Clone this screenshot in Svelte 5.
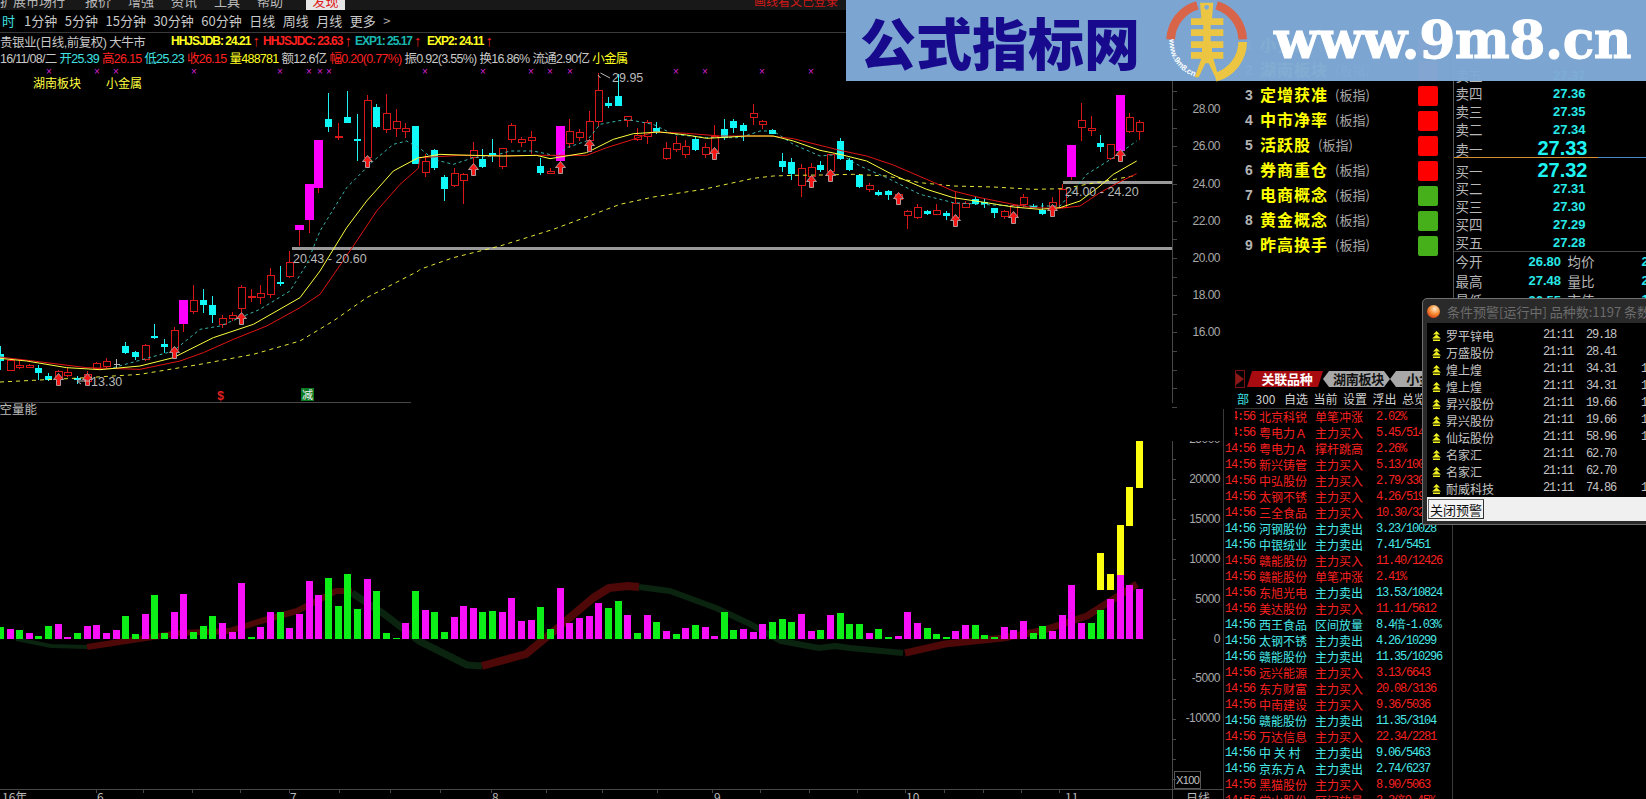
<script>
	// x position of the nth trading day on the chart
	const slot = (n) => Math.round(9.5 + 9.653 * n) + 0.5;

	// [n, type, high, top, bottom, low], y values read at 3x from the reference
	const rawA = [
		[-1,'c',795,820,840,868],[0,'r',830,838,868,870],[1,'r',838,853,859,865],[2,'r',848,852,858,862],[3,'c',852,860,876,898],[4,'c',875,885,897,900],[5,'r',868,872,890,912],[6,'r',862,873,882,888],[7,'c',885,892,898,910],[8,'r',870,880,900,912],[9,'r',842,848,863,868],[10,'r',832,840,856,860],[11,'g',835,849,850,860],[12,'c',782,795,815,818],[13,'c',810,812,828,838],[14,'r',788,793,835,840],[15,'c',730,765,770,775],[16,'c',775,790,798,815],[17,'r',738,748,805,810],[18,'m',657,657,728,752],[19,'r',612,658,692,700],[20,'c',625,657,671,695],[21,'c',645,673,702,725],[22,'r',702,712,730,740],[23,'r',693,703,713,720],[24,'r',612,620,682,700],[25,'r',625,645,650,662],[26,'r',612,637,650,670],[27,'r',562,583,640,650],[28,'c',555,603,608,615],[29,'r',510,545,587,590],[30,'m',432,432,446,495],[31,'m',309,309,416,455],[32,'m',177,177,322,335],[33,'c',37,115,137,153],[34,'r',125,165,170,177],[35,'c',30,108,125,127],[36,'c',100,174,180,240],[37,'r',42,58,228,240],[38,'c',70,78,137,140],[39,'r',40,97,146,157],[40,'r',85,121,142,168],[41,'r',127,142,152,170],[42,'c',135,135,248,250]
	];
	const rawB = [
		[43,'r',280,302,335,347],[44,'c',265,268,320,328],[45,'c',342,348,383,420],[46,'r',322,337,372,378],[47,'r',335,340,358,430],[48,'r',243,268,290,310],[49,'c',265,295,318,320],[50,'c',233,277,283,303],[51,'r',260,262,315,325],[52,'r',185,193,236,245],[53,'r',228,236,245,258],[54,'r',210,228,237,280],[55,'c',290,315,335,342],[56,'r',320,331,338,338],[57,'m',195,195,300,310],[58,'r',175,210,248,260],[59,'r',205,213,228,240],[60,'r',150,181,237,245],[61,'r',35,88,180,197],[62,'c',108,126,134,140],[63,'c',40,105,134,134],[64,'r',165,165,178,198],[65,'r',200,222,235,240],[66,'r',178,185,225,248],[67,'c',183,202,214,218],[68,'r',243,262,293,298],[69,'r',225,247,266,272],[70,'r',238,256,280,292],[71,'c',225,235,267,270],[72,'r',245,259,281,292],[73,'r',193,225,270,275],[74,'c',175,205,232,238],[75,'c',175,181,201,216],[76,'c',185,193,209,240],[77,'r',128,157,170,192],[78,'r',177,181,189,205],[79,'c',205,208,220,220],[80,'c',277,301,317,333],[81,'c',292,304,339,357],[82,'r',310,322,374,407],[83,'r',307,319,345,370],[84,'c',300,313,328,332],
		[85,'r',278,280,330,340],[86,'c',230,241,295,298],[87,'c',290,298,326,330],[88,'c',340,342,377,380],[89,'r',365,372,384,392],[90,'c',388,393,401,404],[91,'c',387,391,402,416],[92,'r',395,400,415,420],[93,'r',447,452,463,505],[94,'r',430,440,470,473],[95,'c',446,450,459,461],[96,'r',430,448,460,463],[97,'c',450,456,466,476],[98,'r',392,428,470,495],[99,'r',420,428,440,442],[100,'c',408,413,430,433],[101,'c',410,423,428,440],[102,'c',440,442,456,470],[103,'r',448,452,466,473],[104,'r',430,433,470,478],[105,'r',400,410,430,437],[106,'c',430,434,440,442],[107,'c',427,446,460,462],[108,'r',408,423,437,445],[109,'r',370,385,440,442],[110,'m',253,253,347,358],[111,'r',125,178,199,240],[112,'r',165,202,208,224],[113,'c',223,245,258,272],[114,'r',250,250,293,296],[115,'m',102,102,270,275],[116,'r',157,169,210,216],[117,'r',177,184,212,238]
	];
	const toCandle = (base) => ([n, type, hi, top, bot, lo]) => ({
		x: slot(n),
		type,
		hi: base + hi / 3,
		top: base + top / 3,
		bot: base + bot / 3,
		lo: base + lo / 3
	});
	const candles = [...rawA.map(toCandle(80)), ...rawB.map(toCandle(60))];

	const arrows = [[5,379],[8,379],[17,352],[24,318],[37,161],[48,169],[57,167],[60,145],[73,153],[83,181],[85,175],[92,198],[98,220],[104,217],[108,210],[115,155]];
	const crosses = [49,97,116,194,280,309,320,329,425,483,531,550,570,676,705,762,811];

	// volume bars, tops read at 3x
	const volA = 'g288 m294 g297 m306 g315 g285 m279 m318 g306 m285 m282 m306 m297 g255 g309 m249 g192 g306 m243 m189 g303 g285 g255 m276 m303 m156 g318 m288 m243 g243 m291 m249 m150 m192 g141 g225 g129 g234 m144 g180 g306 g321 m276 g180 m237 g243 g303 m258 m225 m231 g243 g240 m243 m201 m270 m267 g228 g294 m171 m276 m261 m255 m216 g231 g210'.split(' ');
	const volB = 'm582 g636 m582 g603 m630 g639 m621 g612 m618 m645 g573 g627 m624 m633 m609 g603 g594 g603 m579 m630 g627 m582 g576 g609 g609 m636 g624 g648 m645 m573 m606 g621 g640 g648 m630 m612 g612 g642 g648 m618 m627 m600 g636 g615 m630 m582 m492 m606 g606 g567 m534 m462 m492 m504'.split(' ');
	const volBase = 637.7;
	const bars = [
		...volA.map((v, i) => ({ n: i - 1, type: v[0], top: 530 + Number(v.slice(1)) / 3 })),
		...volB.map((v, i) => ({ n: i + 64, type: v[0], top: 420 + Number(v.slice(1)) / 3 }))
	];
	const yellowBars = [[113,396,507],[114,459,507],[115,312,462],[116,198,315],[117,60,201]];

	const ribbons = [
		{ c: '#0a2410', w: 4, pts: '16,638 51,645 87,646' },
		{ c: '#4e0808', w: 6, pts: '87,646 126,640 180,632 229,630 261,620 297,610 336,590 352,590' },
		{ c: '#0a2410', w: 7, pts: '352,592 384,613 419,640 467,664 482,665' },
		{ c: '#4e0808', w: 8, pts: '482,665 526,653 554,630 593,597 609,587 628,585 639,586' },
		{ c: '#0a2410', w: 6, pts: '639,586 670,590 716,607 750,623 781,640 819,647 835,645 850,647 903,652' },
		{ c: '#4e0808', w: 7, pts: '905,652 945,643 1003,637 1041,630 1087,615 1137,583' }
	];

	const join = (segs) =>
		segs.map(([ox, oy, list]) => list.map(([x, y]) => `${ox + x / 3},${oy + y / 3}`).join(' ')).join(' ');
	const redLine = join([
		[0, 80, [[0,828],[100,840],[260,860],[420,865],[540,840],[610,815],[700,775],[800,735],[900,680],[960,640],[1060,495],[1130,390],[1200,310],[1255,262]]],
		[420, 60, [[0,290],[120,283],[250,285],[350,283],[500,283],[560,260],[640,235],[700,213],[800,217],[900,225],[1050,225],[1120,233]]],
		[820, 60, [[0,253],[60,268],[140,285],[220,312],[320,355],[400,390],[480,410],[580,430],[640,440],[720,442],[780,435],[840,395],[900,362],[950,338]]]
	]);
	const yellowLine = join([
		[0, 80, [[0,832],[80,840],[200,860],[300,866],[420,855],[520,830],[640,770],[760,730],[900,650],[960,570],[1040,440],[1100,360],[1180,270],[1255,230]]],
		[420, 60, [[0,290],[60,280],[120,282],[250,285],[350,283],[390,293],[500,275],[580,235],[640,218],[720,213],[800,222],[860,232],[980,225],[1060,225],[1120,240]]],
		[820, 60, [[0,268],[60,280],[140,300],[220,342],[320,385],[400,410],[480,422],[580,438],[660,445],[720,440],[780,420],[840,375],[880,340],[950,300]]]
	]);
	const cyanLine = join([
		[0, 80, [[340,860],[430,835],[520,810],[600,745],[660,735],[780,685],[870,630],[920,550],[960,450],[1040,320],[1120,240],[1180,190],[1220,180],[1255,200]]],
		[420, 60, [[0,262],[40,295],[100,310],[160,290],[220,285],[270,270],[340,270],[410,285],[440,260],[500,240],[540,190],[620,175],[700,190],[760,220],[860,230],[960,230],[1020,210],[1060,210],[1120,250]]],
		[820, 60, [[0,285],[60,280],[120,315],[200,350],[300,400],[400,425],[480,430],[580,435],[660,435],[720,435],[760,390],[800,340],[880,290],[950,240]]]
	]);
	const dashLine = join([
		[0, 80, [[0,903],[100,898],[260,890],[420,880],[600,850],[760,820],[900,780],[1000,720],[1100,650],[1255,570]]],
		[420, 60, [[0,625],[100,590],[240,555],[400,505],[600,430],[700,408],[850,385],[1000,352],[1060,345],[1120,343]]],
		[820, 60, [[0,342],[100,340],[200,345],[300,365],[400,375],[520,378],[640,385],[730,383],[800,370],[900,352],[950,343]]]
	]);

	const priceLabels = [['28.00',108],['26.00',145],['24.00',182.5],['22.00',220],['20.00',257],['18.00',294],['16.00',331]];
	const volLabels = [['25000',438],['20000',478],['15000',518],['10000',558],['5000',598],['0',637.5],['-5000',677],['-10000',717]];
	const monthLabels = [['16年',0],['6',95],['7',288],['8',490],['9',712],['10',904],['11',1063]];
	const dateTicks = [96,143,192,240,289,339,390,440,491,546,602,657,712,760,809,857,905,944,983,1021,1059];
	const priceTicks = Array.from({ length: 18 }, (_, i) => 89.5 + 18.6 * i);
	const volTicks = Array.from({ length: 17 }, (_, i) => 458 + 20 * i);

	const periods = ['1分钟', '5分钟', '15分钟', '30分钟', '60分钟', '日线', '周线', '月线', '更多'];
	const menus = ['报价', '增强', '资讯', '工具', '帮助'];

	const ranks = [
		{ name: '小金属', up: true },
		{ name: '湖南板块', up: true },
		{ name: '定增获准', up: true },
		{ name: '中市净率', up: true },
		{ name: '活跃股', up: true },
		{ name: '券商重仓', up: true },
		{ name: '电商概念', up: false },
		{ name: '黄金概念', up: false },
		{ name: '昨高换手', up: false }
	];

	const book = [
		{ label: '卖五', price: '27.37' },
		{ label: '卖四', price: '27.36' },
		{ label: '卖三', price: '27.35' },
		{ label: '卖二', price: '27.34' },
		{ label: '卖一', price: '27.33', big: true, qty: '1' },
		{ label: '买一', price: '27.32', big: true, split: true },
		{ label: '买二', price: '27.31', qty: '1' },
		{ label: '买三', price: '27.30', qty: '1' },
		{ label: '买四', price: '27.29' },
		{ label: '买五', price: '27.28' }
	];
	const stats = [
		['今开', '26.80', '均价', '27.15'],
		['最高', '27.48', '量比', '2.31'],
		['最低', '26.55', '市值', '126亿']
	];

	// r = red, c = cyan; time+name colour, then type+value colour
	const radar = [
		['北京科锐','单笔冲涨','2.02%','r','r'],['粤电力Ａ','主力买入','5.45/5140','r','r'],['粤电力Ａ','撑杆跳高','2.26%','r','r'],['新兴铸管','主力买入','5.13/10062','r','r'],['中弘股份','主力买入','2.79/33050','r','r'],['太钢不锈','主力买入','4.26/51980','r','r'],['三全食品','主力买入','10.30/3225','r','r'],['河钢股份','主力卖出','3.23/10028','c','c'],['中银绒业','主力卖出','7.41/5451','c','c'],['赣能股份','主力买入','11.40/12426','r','r'],['赣能股份','单笔冲涨','2.41%','r','r'],['东旭光电','主力卖出','13.53/10824','r','c'],['美达股份','主力买入','11.11/5612','r','r'],['西王食品','区间放量','8.4倍-1.03%','c','c'],['太钢不锈','主力卖出','4.26/10299','c','c'],['赣能股份','主力卖出','11.35/10296','c','c'],['远兴能源','主力买入','3.13/6643','r','r'],['东方财富','主力买入','20.08/3136','r','r'],['中南建设','主力买入','9.36/5036','r','r'],['赣能股份','主力卖出','11.35/3104','c','c'],['万达信息','主力买入','22.34/2281','r','r'],['中 关 村','主力卖出','9.06/5463','c','c'],['京东方Ａ','主力卖出','2.74/6237','c','c'],['黑猫股份','主力买入','8.90/5063','r','r'],['常山股份','区间放量','3.3倍0.45%','r','r']
	];

	const alerts = [
		['罗平锌电','29.18',''],['万盛股份','28.41',''],['煌上煌','34.31','1'],['煌上煌','34.31','1'],['昇兴股份','19.66','1'],['昇兴股份','19.66','1'],['仙坛股份','58.96','1'],['名家汇','62.70',''],['名家汇','62.70',''],['耐威科技','74.86','1']
	];
</script>

<div class="page">
	<header class="menu">
		<span class="menu-first">扩展市场行情</span>
		{#each menus as m}
			<span>{m}</span>
		{/each}
		<span class="menu-tab">发现</span>
		<span class="menu-note">画线看文已登录</span>
	</header>

	<nav class="periods">
		<span class="period-on">时</span>
		{#each periods as p}
			<span>{p}</span>
		{/each}
		<span class="chev">&gt;</span>
	</nav>

	<div class="body">
		<section class="chart-col">
			<div class="info info-one">
				<span class="stock">贵银业(日线,前复权) 大牛市</span>
				<b class="yel ind">HHJSJDB: 24.21<i>↑</i></b>
				<b class="red ind">HHJSJDC: 23.63<i>↑</i></b>
				<b class="teal ind short">EXP1: 25.17<i>↑</i></b>
				<b class="yel ind short">EXP2: 24.11<i>↑</i></b>
			</div>
			<div class="info info-two">
				<span>16/11/08/二</span>
				<span class="cy">开25.39</span>
				<span class="red">高26.15</span>
				<span class="cy">低25.23</span>
				<span class="red">收26.15</span>
				<span class="yel">量488781</span>
				<span>额12.6亿</span>
				<span class="red">幅0.20(0.77%)</span>
				<span>振0.92(3.55%)</span>
				<span>换16.86%</span>
				<span>流通2.90亿</span>
				<span class="yel">小金属</span>
			</div>

			<svg class="chart" width="1223" height="734" viewBox="0 65 1223 734">
				<g class="axes">
					<line x1="1172.5" y1="65" x2="1172.5" y2="402" />
					<line x1="1172.5" y1="440" x2="1172.5" y2="799" />
					<line x1="0" y1="401.5" x2="411" y2="401.5" />
					<line x1="0" y1="788.5" x2="1223" y2="788.5" />
					{#each priceTicks as y}
						<line x1="1172" y1={Math.round(y) + 0.5} x2="1177" y2={Math.round(y) + 0.5} />
					{/each}
					{#each volTicks as y}
						<line x1="1172" y1={Math.round(y) + 0.5} x2="1176" y2={Math.round(y) + 0.5} />
					{/each}
					{#each dateTicks as x}
						<line x1={x + 0.5} y1="788" x2={x + 0.5} y2="792" />
					{/each}
				</g>

				{#each crosses as x}
					<text class="cross" x={x} y="74">×</text>
				{/each}
				<text class="tag" x="33" y="87">湖南板块</text>
				<text class="tag" x="106" y="87">小金属</text>

				<rect class="level" x="292" y="245.5" width="880" height="3" />
				<rect class="level" x="1063" y="179.5" width="109" height="3" />

				{#each candles as c}
					{#if c.type === 'c'}
						<line class="wick-c" x1={c.x} y1={c.hi} x2={c.x} y2={c.lo} />
						<rect class="body-c" x={c.x - 3.5} y={c.top} width="7" height={c.bot - c.top} />
					{:else if c.type === 'm'}
						<line class="wick-r" x1={c.x} y1={c.hi} x2={c.x} y2={c.lo} />
						<rect class="body-m" x={c.x - 4.5} y={c.top} width="9" height={c.bot - c.top} />
					{:else if c.type === 'g'}
						<line class="wick-g" x1={c.x} y1={c.hi} x2={c.x} y2={c.lo} />
						<line class="wick-g" x1={c.x - 3} y1={c.top} x2={c.x + 3} y2={c.top} />
					{:else}
						<line class="wick-r" x1={c.x} y1={c.hi} x2={c.x} y2={c.lo} />
						<rect class="body-r" x={c.x - 3} y={c.top} width="6.5" height={c.bot - c.top} />
					{/if}
				{/each}

				<polyline class="ma-cyan" points={cyanLine} />
				<polyline class="ma-dash" points={dashLine} />
				<polyline class="ma-red" points={redLine} />
				<polyline class="ma-yellow" points={yellowLine} />

				{#each arrows as [n, y]}
					<path
						class="arrow"
						transform="translate({slot(n)} {y})"
						d="M0 -6.5 L5 -0.5 L2 -0.5 L2 5.5 L-2 5.5 L-2 -0.5 L-5 -0.5 Z"
					/>
				{/each}

				<text class="note" x="293" y="262">20.43 - 20.60</text>
				<text class="note" x="1065" y="195">24.00 - 24.20</text>
				<text class="note" x="612" y="81">29.95</text>
				<path class="pointer" d="M600.5 77 L598 74 M600.5 72 L610 77" />
				<text class="note" x="91" y="385">13.30</text>
				<path class="pointer" d="M77 380 L90 380 M77 380 L81 377 M77 380 L81 383" />

				<text class="dollar" x="220.5" y="399">$</text>
				<rect class="jian-box" x="301" y="387" width="13" height="13" />
				<text class="jian" x="307.5" y="398">减</text>

				{#each priceLabels as [t, y]}
					<text class="axis-label" x="1220" y={y + 4}>{t}</text>
				{/each}

				<text class="pane-title" x="-13" y="413">多空量能</text>

				{#each ribbons as r}
					<polyline class="ribbon" stroke={r.c} stroke-width={r.w} points={r.pts} />
				{/each}

				{#each bars as b}
					<rect
						class={b.type === 'g' ? 'vol-g' : 'vol-m'}
						x={slot(b.n) - 3.5}
						y={b.top}
						width="7"
						height={volBase - b.top}
					/>
				{/each}
				{#each yellowBars as [n, a, z]}
					<rect class="vol-y" x={slot(n) - 3.5} y={420 + a / 3} width="7" height={(z - a) / 3} />
				{/each}

				{#each volLabels as [t, y]}
					<text class="axis-label" x="1220" y={y + 4}>{t}</text>
				{/each}
				<rect class="pane-mask" x="1174" y="415" width="49" height="25" />

				<rect class="x100" x="1174.5" y="770.5" width="26" height="17" />
				<text class="x100-text" x="1176" y="783">X100</text>
				{#each monthLabels as [t, x]}
					<text class="date-label" x={x + 2} y="801">{t}</text>
				{/each}
				<text class="date-label" x="1186" y="802">日线</text>
			</svg>
		</section>

		<aside class="side">
			<div class="upper">
				<div class="ranks">
					{#each ranks as r, i}
						<div class="rank">
							<span class="rank-no">{i + 1}</span>
							<span class="rank-name">{r.name}</span>
							<span class="rank-kind">(板指)</span>
							<span class="rank-flag" class:up={r.up}></span>
						</div>
					{/each}
				</div>
				<div class="book">
					{#each book as row}
						<div class="book-row" class:big={row.big} class:split={row.split}>
							<span class="book-label">{row.label}</span>
							<span class="book-price">{row.price}</span>
							<span class="book-qty">{row.qty ?? ''}</span>
						</div>
					{/each}
					<div class="stats">
						{#each stats as s}
							<div class="stat-row">
								<span>{s[0]}</span>
								<b>{s[1]}</b>
								<span>{s[2]}</span>
								<b>{s[3]}</b>
							</div>
						{/each}
					</div>
				</div>
			</div>

			<div class="lower">
				<div class="tabs">
					<span class="tab-play"><i></i></span>
					<span class="tab tab-on">关联品种</span>
					<span class="tab">湖南板块</span>
					<span class="tab">小金属</span>
				</div>
				<div class="tools">
					<span class="cy">部</span>
					<span>300</span>
					<span>自选</span>
					<span>当前</span>
					<span>设置</span>
					<span>浮出</span>
					<span>总览</span>
				</div>
				<div class="radar">
					{#each radar as [name, kind, val, a, b]}
						<div class="radar-row">
							<span class="mono {a}">14:56</span>
							<span class={a}>{name}</span>
							<span class={b}>{kind}</span>
							<span class="mono {b}">{val}</span>
						</div>
					{/each}
					<div class="radar-mask"></div>
				</div>
			</div>
		</aside>
	</div>

	<div class="banner">
		<span class="banner-title">公式指标网</span>
		<svg class="logo" width="100" height="84" viewBox="0 0 300 252">
			<path class="logo-red" d="M32 118 A111 111 0 0 1 112 16" />
			<path class="logo-red" d="M170 16 A111 111 0 0 1 248 118" />
			<path class="logo-yel" d="M248 126 A111 111 0 0 1 166 232" />
			<path class="logo-fig" d="M120 8 H160 L156 55 H190 V75 H152 V88 H190 V108 H152 V124 H190 V144 H156 V156 H190 V176 H160 L176 232 H166 L146 190 H136 L116 232 H104 L124 176 H93 V156 H126 V144 H93 V124 H130 V108 H93 V88 H130 V75 H93 V55 H124 Z" />
			<circle class="logo-hole" cx="140" cy="22" r="7" />
			<path id="logo-curve" class="logo-curve" d="M28 118 A112 112 0 0 0 118 234" />
			<text class="logo-url"><textPath href="#logo-curve">www.9m8.cn</textPath></text>
		</svg>
		<span class="banner-url">www.9m8.cn</span>
	</div>

	<div class="popup">
		<div class="popup-title">
			<span class="ball"></span>
			<span>条件预警[运行中] 品种数:1197 条数:3</span>
		</div>
		<div class="popup-list">
			{#each alerts as [name, price, extra]}
				<div class="alert">
					<svg width="9" height="10" viewBox="0 0 9 10">
						<path class="alert-icon" d="M4.5 0 L8 3.5 H1 Z M4.5 3.5 L9 7.5 H0 Z M1 8.5 H8 V10 H1 Z" />
					</svg>
					<span class="alert-name">{name}</span>
					<span class="mono">21:11</span>
					<span class="mono">{price}</span>
					<span class="mono">{extra}</span>
				</div>
			{/each}
		</div>
		<div class="popup-foot">
			<button class="popup-btn">关闭预警</button>
		</div>
	</div>
</div>

<style>
	:global(body) {
		margin: 0;
		background: #000;
	}

	.page {
		position: relative;
		display: flex;
		flex-direction: column;
		width: 1646px;
		height: 799px;
		overflow: hidden;
		background: #000;
		color: #c8c8c8;
		font-family: "Noto Sans CJK SC", "Liberation Sans", sans-serif;
	}

	.menu {
		display: flex;
		align-items: flex-end;
		flex: 0 0 10px;
		height: 10px;
		overflow: hidden;
		background: #181818;
		font-size: 13px;
		line-height: 18px;
		color: #bbb;
	}

	.menu > span {
		flex: none;
		height: 18px;
		margin-left: 17px;
	}

	.menu .menu-first {
		margin-left: 0;
		width: 68px;
		overflow: hidden;
	}

	.menu .menu-tab {
		width: 39px;
		margin-left: 23px;
		text-align: center;
		background: #e6e6e6;
		color: #e02020;
	}

	.menu .menu-note {
		margin-left: 409px;
		font-size: 12px;
		color: #d01818;
	}

	.periods {
		display: flex;
		align-items: center;
		flex: 0 0 22px;
		gap: 7.5px;
		padding-left: 2px;
		border-bottom: 1px solid #3a3a3a;
		font-size: 13px;
		line-height: 22px;
	}

	.period-on {
		margin-right: 1.5px;
		color: #3fe0e0;
	}

	.chev {
		color: #aaa;
	}

	.body {
		display: flex;
		flex: 1;
		min-height: 0;
	}

	.chart-col {
		display: flex;
		flex-direction: column;
		flex: 0 0 1223px;
		min-width: 0;
	}

	.info {
		display: flex;
		align-items: center;
		flex: none;
		height: 16px;
		white-space: nowrap;
		font-size: 12.5px;
		font-family: "Liberation Sans", "Noto Sans CJK SC", sans-serif;
	}

	.info-two {
		height: 17px;
		gap: 3px;
		letter-spacing: -0.72px;
	}

	.stock {
		width: 171px;
		letter-spacing: -0.5px;
	}

	.ind {
		display: inline-flex;
		align-items: center;
		flex: none;
		width: 92px;
		font-size: 12px;
		font-weight: 700;
		letter-spacing: -1px;
	}

	.ind.short {
		width: 72px;
	}

	.ind i {
		margin-left: 2px;
		font-size: 15px;
		line-height: 16px;
		font-weight: 400;
		color: #f02020;
		font-style: normal;
	}

	.yel {
		color: #ffff20;
	}

	.red {
		color: #ff2020;
	}

	.teal {
		color: #18b8b0;
	}

	.cy {
		color: #3fe0e0;
	}

	.chart {
		display: block;
		flex: none;
		shape-rendering: crispEdges;
	}

	.axes line {
		stroke: #484848;
		stroke-width: 1;
	}

	.cross {
		fill: #d820d8;
		font: 10px "Liberation Sans", sans-serif;
		text-anchor: middle;
	}

	.tag {
		fill: #ffff40;
		font: 12px "Noto Sans CJK SC", sans-serif;
	}

	.level {
		fill: #9a9a9a;
	}

	.wick-c {
		stroke: #22f0f0;
	}

	.wick-r {
		stroke: #d81818;
	}

	.wick-g {
		stroke: #b8b8b8;
	}

	.body-c {
		fill: #10f8f8;
	}

	.body-m {
		fill: #ff00ff;
	}

	.body-r {
		fill: #000;
		stroke: #d81818;
		stroke-width: 1;
	}

	.ma-red,
	.ma-yellow,
	.ma-cyan,
	.ma-dash,
	.ribbon {
		fill: none;
		stroke-linejoin: round;
		shape-rendering: auto;
	}

	.ma-red {
		stroke: #e01414;
		stroke-width: 1;
	}

	.ma-yellow {
		stroke: #ffff40;
		stroke-width: 1;
	}

	.ma-cyan {
		stroke: #40c8c0;
		stroke-width: 0.9;
		stroke-dasharray: 3 3;
	}

	.ma-dash {
		stroke: #ffff40;
		stroke-width: 0.9;
		stroke-dasharray: 4 4;
	}

	.arrow {
		fill: #f81818;
		stroke: #b09898;
		stroke-width: 1;
		shape-rendering: auto;
	}

	.note {
		fill: #b8b8b8;
		font: 12.5px "Liberation Sans", sans-serif;
	}

	.pointer {
		fill: none;
		stroke: #b8b8b8;
		shape-rendering: auto;
	}

	.dollar {
		fill: #e02020;
		font: bold 12px "Liberation Sans", sans-serif;
		text-anchor: middle;
	}

	.jian-box {
		fill: #0c7a20;
	}

	.jian {
		fill: #f0f0f0;
		font: 11px "Noto Sans CJK SC", sans-serif;
		text-anchor: middle;
	}

	.axis-label {
		fill: #a8a8a8;
		font: 12px "Liberation Sans", sans-serif;
		letter-spacing: -0.5px;
		text-anchor: end;
	}

	.pane-title {
		fill: #bbb;
		font: 12.5px "Noto Sans CJK SC", sans-serif;
	}

	.pane-mask {
		fill: #000;
	}

	.vol-g {
		fill: #0cf018;
	}

	.vol-m {
		fill: #f810f8;
	}

	.vol-y {
		fill: #ffff10;
	}

	.x100 {
		fill: none;
		stroke: #555;
	}

	.x100-text {
		fill: #c0c0c0;
		font: 11px "Liberation Sans", sans-serif;
		letter-spacing: -0.6px;
	}

	.date-label {
		fill: #b8b8b8;
		font: 12px "Noto Sans CJK SC", "Liberation Sans", sans-serif;
	}

	.side {
		display: flex;
		flex-direction: column;
		flex: 1;
		min-width: 0;
	}

	.upper {
		display: flex;
		flex: 0 0 337px;
		overflow: hidden;
	}

	.ranks {
		flex: 0 0 229.5px;
	}

	.rank {
		display: flex;
		align-items: center;
		height: 25px;
		padding: 0 15px 0 22px;
	}

	.rank-no {
		width: 15px;
		margin-bottom: 2px;
		font: bold 14px "Liberation Sans", sans-serif;
		color: #b4b4b4;
	}

	.rank-name {
		margin-bottom: 4px;
		font-size: 16px;
		font-weight: 700;
		letter-spacing: 1px;
		color: #ffff00;
	}

	.rank-kind {
		margin-bottom: 2px;
		margin-left: 7px;
		font-size: 13px;
		color: #a8a8a8;
	}

	.rank-flag {
		width: 20px;
		height: 20px;
		margin-left: auto;
		border-radius: 2px;
		background: #45b01a;
	}

	.rank-flag.up {
		background: #ff0000;
	}

	.book {
		flex: 1;
		padding: 32px 0 0 2px;
		border-left: 1px solid #555;
	}

	.book-row {
		display: grid;
		grid-template-columns: 78px 54px 1fr;
		align-items: center;
		height: 18px;
		white-space: nowrap;
	}

	.book-row.big {
		height: 20px;
	}

	.book-row.split {
		height: 21px;
		padding-top: 1px;
		box-sizing: border-box;
		border-top: 1px solid;
		border-image: linear-gradient(to right, #d89030 0 144px, #4a88c8 144px) 1;
		margin-left: -2px;
		padding-left: 2px;
	}

	.book-label {
		font-size: 13.5px;
		color: #b8b8b8;
	}

	.book-price {
		padding-right: 2px;
		text-align: right;
		font: bold 13px "Liberation Sans", sans-serif;
		color: #28e8e8;
	}

	.big .book-price {
		padding-right: 0;
		font-size: 20px;
		color: #1ef4f4;
	}

	.book-qty {
		padding-left: 59px;
		font: bold 13px "Liberation Sans", sans-serif;
		color: #e8e8e8;
	}

	.stats {
		margin: 1px 0 0 -2px;
		padding-left: 2px;
		border-top: 1px solid #444;
	}

	.stat-row {
		display: grid;
		grid-template-columns: 73px 39px 74px 1fr;
		align-items: center;
		height: 19.5px;
		font-size: 13.5px;
		color: #b8b8b8;
		white-space: nowrap;
	}

	.stat-row:first-child {
		margin-top: -1px;
	}

	.stat-row b {
		font: bold 13px "Liberation Sans", sans-serif;
		color: #28e8e8;
	}

	.lower {
		display: flex;
		flex: 1;
		flex-direction: column;
		min-height: 0;
		width: 229.5px;
	}

	.tabs {
		display: flex;
		align-items: center;
		flex: 0 0 18px;
		padding-left: 12px;
		overflow: hidden;
	}

	.tab-play {
		display: flex;
		align-items: center;
		justify-content: center;
		width: 13px;
		height: 18px;
		margin-right: 2px;
		box-sizing: border-box;
		border: 1px solid #7a1010;
	}

	.tab-play i {
		border-left: 8px solid #8a1818;
		border-top: 6px solid transparent;
		border-bottom: 6px solid transparent;
	}

	.tab {
		flex: none;
		width: 63px;
		height: 16px;
		padding-left: 4px;
		font-size: 13px;
		font-weight: 700;
		line-height: 16px;
		text-align: center;
		letter-spacing: -0.2px;
		color: #111;
		background: #a8a8a8;
		clip-path: polygon(6px 0, calc(100% - 6px) 0, 100% 50%, calc(100% - 6px) 100%, 6px 100%, 0 50%);
	}

	.tab-on {
		width: 72px;
		color: #fff;
		background: #a80c10;
		clip-path: polygon(5px 0, 100% 0, calc(100% - 5px) 100%, 0 100%);
	}

	.tools {
		display: flex;
		align-items: center;
		flex: 0 0 20px;
		gap: 5.5px;
		margin-left: 12px;
		padding-left: 2px;
		border-bottom: 1px solid #333;
		font-size: 12px;
		color: #d0d0d0;
		white-space: nowrap;
		overflow: hidden;
	}

	.tools span:nth-child(2) {
		margin-left: 1px;
		margin-right: 3px;
	}

	.radar {
		position: relative;
		flex: 1;
		min-height: 0;
		overflow: hidden;
		border-left: 1px solid #3a3a3a;
		border-right: 1px solid #3a3a3a;
	}

	.radar-mask {
		position: absolute;
		top: 0;
		left: -1px;
		width: 12px;
		height: 33px;
		background: #000;
	}

	.radar-row {
		display: grid;
		grid-template-columns: 34px 56px 61px 1fr;
		align-items: center;
		height: 16px;
		padding-left: 1px;
		font-size: 12px;
		line-height: 16px;
		white-space: pre;
	}

	.radar-row .r {
		color: #f82020;
	}

	.radar-row .c {
		color: #48e8e8;
	}

	.mono {
		font-family: "Liberation Mono", monospace;
		font-size: 12px;
		letter-spacing: -1.2px;
	}

	.banner {
		position: absolute;
		top: 0;
		left: 846px;
		display: flex;
		align-items: center;
		width: 800px;
		height: 81px;
		background: rgba(127, 170, 214, 0.975);
	}

	.banner-title {
		margin-left: 14px;
		font-size: 56px;
		font-weight: 900;
		line-height: 81px;
		color: #170a8c;
	}

	.logo {
		position: absolute;
		left: 314px;
		top: 0;
	}

	.logo-red,
	.logo-yel,
	.logo-curve {
		fill: none;
		stroke-width: 26;
	}

	.logo-red {
		stroke: #d8654a;
	}

	.logo-yel {
		stroke: #ecc642;
	}

	.logo-curve {
		stroke: none;
	}

	.logo-fig {
		fill: #ecc642;
	}

	.logo-hole {
		fill: #7faad6;
	}

	.logo-url {
		fill: #fff;
		font: bold 24px "Liberation Sans", sans-serif;
	}

	.banner-url {
		position: absolute;
		left: 428px;
		top: 10px;
		font: 900 52px/60px "DejaVu Serif", serif;
		letter-spacing: -0.5px;
		-webkit-text-stroke: 1px #fff;
		color: #fff;
	}

	.popup {
		position: absolute;
		top: 298px;
		left: 1422px;
		width: 240px;
		height: 227px;
		box-sizing: border-box;
		padding: 0 4px 4px;
		border: 1px solid #707070;
		border-radius: 5px 0 0 0;
		background: #2a2a2a;
	}

	.popup-title {
		display: flex;
		align-items: center;
		gap: 7px;
		height: 24px;
		font-size: 13px;
		color: #6c6c6c;
		white-space: nowrap;
		overflow: hidden;
	}

	.ball {
		flex: none;
		width: 13px;
		height: 13px;
		border-radius: 50%;
		background: radial-gradient(circle at 60% 30%, #ffe9c8, #f48a30 45%, #d02810 90%);
	}

	.popup-list {
		height: 174px;
		padding-top: 4px;
		box-sizing: border-box;
		background: #000;
	}

	.alert {
		display: grid;
		grid-template-columns: 14px 97px 43px 55px 1fr;
		align-items: center;
		height: 17px;
		padding-left: 5px;
		font-size: 12px;
		line-height: 17px;
		color: #c4c4c4;
	}

	.alert svg {
		display: block;
	}

	.alert-icon {
		fill: #f0f020;
	}

	.popup-foot {
		display: flex;
		align-items: center;
		height: 24px;
		background: #f0f0f0;
	}

	.popup-btn {
		width: 56px;
		height: 20px;
		padding: 0;
		margin-left: 1px;
		box-sizing: border-box;
		border: 1px solid #666;
		border-right-color: #333;
		border-bottom-color: #333;
		background: #f4f4f4;
		font: 13px "Noto Sans CJK SC", sans-serif;
		color: #111;
	}
</style>
